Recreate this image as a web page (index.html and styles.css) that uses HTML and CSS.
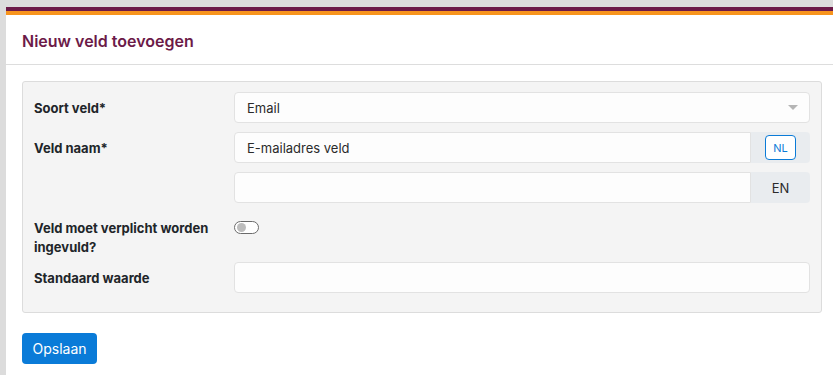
FILE: index.html
```html
<!DOCTYPE html>
<html lang="nl">
<head>
<meta charset="utf-8">
<title>Nieuw veld toevoegen</title>
<link rel="stylesheet" href="styles.css">
</head>
<body>
<div class="modal">
  <div class="stripe-purple"></div>
  <div class="stripe-orange"></div>
  <div class="modal-header">
    <h2 class="modal-title">Nieuw veld toevoegen</h2>
  </div>
  <div class="modal-body">
    <div class="fieldbox">
      <div class="row">
        <label class="label">Soort veld*</label>
        <div class="control">
          <div class="select">
            <span>Email</span>
            <span class="caret"></span>
          </div>
        </div>
      </div>
      <div class="row">
        <label class="label">Veld naam*</label>
        <div class="control stack">
          <div class="group">
            <div class="input">E-mailadres veld</div>
            <div class="addon"><span class="lang-btn">NL</span></div>
          </div>
          <div class="group">
            <div class="input"></div>
            <div class="addon"><span class="lang-txt">EN</span></div>
          </div>
        </div>
      </div>
      <div class="row row-toggle">
        <label class="label label-multi">Veld moet verplicht worden ingevuld?</label>
        <div class="control">
          <span class="toggle"><span class="knob"></span></span>
        </div>
      </div>
      <div class="row">
        <label class="label">Standaard waarde</label>
        <div class="control">
          <div class="input"></div>
        </div>
      </div>
    </div>
    <button class="btn-primary" type="button">Opslaan</button>
  </div>
</div>
</body>
</html>
```

FILE: styles.css
```css
html, body {
  margin: 0;
  padding: 0;
}
body {
  background: #dcdcdc;
  font-family: Inter, "Noto Sans", Arial, sans-serif;
  color: #212529;
  padding: 7px 0 0 6px;
  height: 375px;
  box-sizing: border-box;
  overflow: hidden;
}
.modal {
  background: #fff;
  width: 827px;
  height: 368px;
  overflow: hidden;
}
.stripe-purple {
  height: 4px;
  background: #6c1a48;
}
.stripe-orange {
  height: 4px;
  background: #f7941d;
}
.modal-header {
  height: 50px;
  border-bottom: 1px solid #dddddd;
  padding: 0 16px;
  display: flex;
  align-items: center;
  box-sizing: border-box;
}
.modal-title {
  margin: 0;
  font-size: 16px;
  font-weight: 600;
  color: #6c1a48;
  padding-top: 2px;
}
.modal-body {
  padding: 16px 16px;
}
.fieldbox {
  width: 800px;
  box-sizing: border-box;
  background: #f4f4f4;
  border: 1px solid #dcdcdc;
  border-radius: 3px;
  padding: 10px 11px 10px 11px;
}
.row {
  display: flex;
  margin-bottom: 9px;
}
.label {
  width: 200px;
  flex: 0 0 200px;
  font-size: 13px;
  font-weight: 700;
  line-height: 16px;
  padding-top: 8px;
  color: #212529;
}
.label-multi {
  line-height: 19px;
  padding-top: 6px;
  padding-right: 10px;
  box-sizing: border-box;
}
.control {
  flex: 1;
}
.stack {
  display: flex;
  flex-direction: column;
  gap: 9px;
}
.select, .input {
  height: 31px;
  box-sizing: border-box;
  background: #fdfdfd;
  border: 1px solid #e2e2e2;
  border-radius: 4px;
  font-size: 13px;
  color: #2b2b2b;
  padding: 0 12px;
  display: flex;
  align-items: center;
}
.select {
  justify-content: space-between;
}
.caret {
  width: 0;
  height: 0;
  border-left: 5px solid transparent;
  border-right: 5px solid transparent;
  border-top: 5px solid #b5b5b5;
  margin-right: -1px;
}
.group {
  display: flex;
}
.group .input {
  flex: 1;
  border-top-right-radius: 0;
  border-bottom-right-radius: 0;
}
.addon {
  width: 59px;
  height: 31px;
  box-sizing: border-box;
  background: #e9ecef;
  border-radius: 0 4px 4px 0;
  display: flex;
  align-items: center;
  justify-content: center;
}
.lang-btn {
  width: 31px;
  height: 25px;
  box-sizing: border-box;
  border: 1px solid #0b7bd7;
  border-radius: 4px;
  background: #fff;
  color: #0b7bd7;
  font-size: 11px;
  display: flex;
  align-items: center;
  justify-content: center;
}
.lang-txt {
  font-size: 13px;
  color: #2b2b2b;
}
.row-toggle {
  margin-bottom: 5px;
}
.row-toggle .label-multi {
  padding-top: 7px;
}
.row-toggle .control {
  padding-top: 9px;
}
.toggle {
  display: block;
  width: 25px;
  height: 13px;
  box-sizing: border-box;
  border: 1px solid #6b6b6b;
  border-radius: 7px;
  background: #fff;
  position: relative;
}
.knob {
  position: absolute;
  left: 2px;
  top: 1px;
  width: 9px;
  height: 9px;
  border-radius: 50%;
  background: #bdbdbd;
}
.btn-primary {
  display: block;
  margin-top: 20px;
  height: 31px;
  width: 75px;
  background: #0a7bd8;
  color: #fff;
  border: none;
  border-radius: 4px;
  font-family: Inter, "Noto Sans", Arial, sans-serif;
  font-size: 14px;
  padding: 0;
}
```
